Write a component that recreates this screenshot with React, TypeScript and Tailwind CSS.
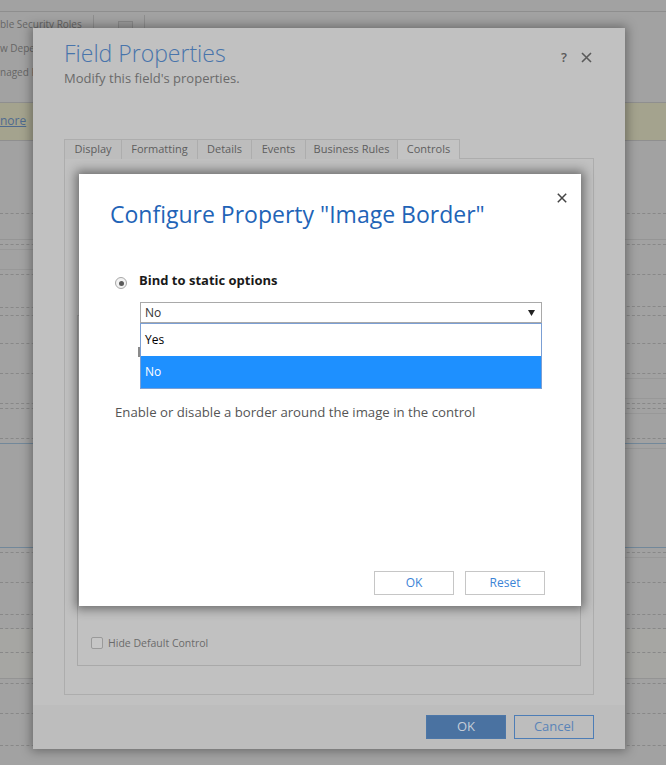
import React from "react";

const leftLines: string[] = [
  "h-[73px] border-b border-dashed border-[#888]",
  "h-[26px] border-b border-[#959595]",
  "h-[5px] border-b border-dashed border-[#888]",
  "h-[5px] border-b border-[#989898]",
  "h-[20px] border-b border-[#989898]",
  "h-[5px] border-b border-dashed border-[#888]",
  "h-[33px] border-b border-dashed border-[#888]",
  "h-[8px] border-b border-dashed border-[#888]",
  "h-[28px] border-b border-dashed border-[#888]",
  "h-[30px] border-b border-dashed border-[#888]",
  "h-[30px] border-b border-dashed border-[#888]",
  "h-[5px] border-b border-dashed border-[#888]",
  "h-[30px] border-b border-dashed border-[#888]",
  "h-[5px] border-b border-[#72889a]",
  "h-[104px] border-b border-[#72889a]",
  "h-[5px] border-b border-dashed border-[#888]",
  "h-[30px] border-b border-dashed border-[#888]",
  "h-[32px] border-b border-dashed border-[#888]",
  "h-[14px] border-b border-dashed border-[#888]",
  "h-[24px] border-b border-dashed border-[#888] bg-[#a6a6a3]",
  "h-[26px] border-b border-[#949494] bg-[#a6a6a3]",
  "h-[5px] border-b border-dashed border-[#888]",
  "h-[30px] border-b border-dashed border-[#888]",
  "h-[32px] border-b border-dashed border-[#888]",
];

const rightLines: string[] = [
  "h-[73px] border-b border-dashed border-[#888]",
  "h-[26px] border-b border-[#959595]",
  "h-[5px] border-b border-dashed border-[#888]",
  "h-[30px] border-b border-dashed border-[#888]",
  "h-[32px] border-b border-dashed border-[#888]",
  "h-[9px] border-b border-dashed border-[#888]",
  "h-[28px] border-b border-dashed border-[#888]",
  "h-[30px] border-b border-dashed border-[#888]",
  "h-[5px] border-b border-[#989898]",
  "h-[20px] border-b border-[#989898]",
  "h-[5px] border-b border-dashed border-[#888]",
  "h-[5px] border-b border-dashed border-[#888]",
  "h-[5px] border-b border-[#989898]",
  "h-[25px] border-b border-dashed border-[#888]",
  "h-[5px] border-b border-[#72889a]",
  "h-[5px] border-b border-[#989898]",
  "h-[99px] border-b border-[#72889a]",
  "h-[5px] border-b border-dashed border-[#888]",
  "h-[5px] border-b border-[#989898]",
  "h-[25px] border-b border-dashed border-[#888]",
  "h-[32px] border-b border-dashed border-[#888]",
  "h-[14px] border-b border-dashed border-[#888]",
  "h-[24px] border-b border-dashed border-[#888] bg-[#a6a6a3]",
  "h-[26px] border-b border-[#949494] bg-[#a6a6a3]",
  "h-[5px] border-b border-dashed border-[#888]",
  "h-[30px] border-b border-dashed border-[#888]",
  "h-[32px] border-b border-dashed border-[#888]",
];

function Background() {
  return (
    <div className="flex flex-col">
      <div className="h-[12px] border-b border-[#8e8e8e]" />
      <div className="h-[90px] flex flex-col text-[10px] leading-[24px] text-[#666]">
        <div className="flex items-start h-[24px]">
          <span className="whitespace-nowrap">ble Security Roles</span>
          <div className="ml-[11px] mt-[3px] w-px h-[18px] bg-[#8e8e8e]" />
          <div className="ml-[24px] mt-[9px] w-[15px] h-[12px] border border-[#8a8a8a] bg-[#9c9c9c]" />
          <div className="ml-[11px] mt-[3px] w-px h-[18px] bg-[#8e8e8e]" />
        </div>
        <div className="w-[33px] overflow-hidden whitespace-nowrap">w Depe</div>
        <div className="w-[33px] overflow-hidden whitespace-nowrap">naged P</div>
      </div>
      <div className="h-[39px] bg-[#a4a38e] border-y border-[#8f8f8f] pt-[10px] text-[12px] leading-[16px]">
        <span className="underline text-[#4f6a8f]">nore</span>
      </div>
      <div className="flex justify-between">
        <div className="w-[40px] flex flex-col">
          {leftLines.map((c, i) => (
            <div key={i} className={c} />
          ))}
        </div>
        <div className="w-[60px] flex flex-col">
          {rightLines.map((c, i) => (
            <div key={i} className={c} />
          ))}
        </div>
      </div>
    </div>
  );
}

const tabs = [
  { label: "Display", w: "w-[57px]" },
  { label: "Formatting", w: "w-[76px]" },
  { label: "Details", w: "w-[54px]" },
  { label: "Events", w: "w-[54px]" },
  { label: "Business Rules", w: "w-[92px]" },
];

function FieldDialog() {
  return (
    <div className="absolute left-[33px] top-[28px] w-[592px] h-[721px] bg-[#c1c1c1] shadow-[0_0_10px_2px_rgba(0,0,0,0.35)] flex flex-col">
      <div className="flex justify-between pl-[31px] pr-[33px] pt-[11px]">
        <div className="flex flex-col">
          <h1 className="text-[23px] leading-[28px] font-light text-[#4874ab]">Field Properties</h1>
          <p className="mt-[2px] text-[13px] leading-[18px] text-[#6a6a6a]">Modify this field's properties.</p>
        </div>
        <div className="flex items-center gap-[14px] mt-[10px] h-[16px]">
          <span className="text-[13px] font-semibold text-[#5a5a5a] leading-[16px]">?</span>
          <svg width="11" height="11" viewBox="0 0 11 11">
            <path d="M1 1 L10 10 M10 1 L1 10" stroke="#5a5a5a" strokeWidth="1.6" />
          </svg>
        </div>
      </div>

      <div className="mt-[52px] flex mx-[31px] h-[20px]">
        {tabs.map((t) => (
          <div
            key={t.label}
            className={`${t.w} h-[20px] border-l border-t border-[#adadad] bg-[#bdbdbd] text-center text-[11px] leading-[18px] text-[#5e5e5e]`}
          >
            {t.label}
          </div>
        ))}
        <div className="w-[63px] h-[20px] border-x border-t border-[#adadad] bg-[#c3c3c3] text-center text-[11px] leading-[18px] text-[#5e5e5e]">
          Controls
        </div>
        <div className="flex-1 h-[20px] border-b border-[#adadad]" />
      </div>

      <div className="mx-[31px] h-[536px] border-x border-b border-[#adadad] flex flex-col px-[12px] pt-[156px] pb-[28px]">
        <div className="flex-1 border border-[#a9a9a9] flex flex-col justify-end pl-[13px] pb-[15px]">
          <div className="flex items-center">
            <div className="w-[12px] h-[12px] rounded-[2px] border border-[#9a9a9a] bg-[#c6c6c6]" />
            <span className="ml-[5px] text-[10.5px] leading-[14px] text-[#6b6b6b]">Hide Default Control</span>
          </div>
        </div>
      </div>

      <div className="mt-auto h-[44px] bg-[#bdbdbd] flex justify-end items-start gap-[8px] pr-[31px] pt-[10px]">
        <button className="w-[80px] h-[24px] bg-[#4a72a1] border border-[#4d77a8] text-[13px] text-[#c5cdd8]">OK</button>
        <button className="w-[80px] h-[24px] border border-[#4d7db6] text-[13px] text-[#5a84b8]">Cancel</button>
      </div>
    </div>
  );
}

function ConfigModal() {
  return (
    <div className="absolute left-[79px] top-[174px] w-[502px] h-[432px] bg-white shadow-[0_0_10px_3px_rgba(0,0,0,0.45)] flex flex-col">
      <svg className="absolute top-[19px] right-[14px]" width="10" height="10" viewBox="0 0 10 10">
        <path d="M0.8 0.8 L9.2 9.2 M9.2 0.8 L0.8 9.2" stroke="#444" strokeWidth="1.5" />
      </svg>
      <div className="absolute left-[59px] top-[173px] w-[2px] h-[10px] bg-[#8a8a8a]" />

      <h2 className="pl-[31px] pt-[26px] text-[23px] leading-[28px] text-[#1f64b7] whitespace-nowrap">
        Configure Property "Image Border"
      </h2>

      <div className="mt-[43px] pl-[36px] flex items-start">
        <div className="mt-[6px] w-[12px] h-[12px] rounded-full border border-[#a8a8a8] bg-[#f2f2f2] flex items-center justify-center">
          <div className="w-[5px] h-[5px] rounded-full bg-[#5a5a5a]" />
        </div>
        <span className="ml-[12px] text-[13px] leading-[18px] font-bold text-[#1a1a1a]">Bind to static options</span>
      </div>

      <div className="mt-[13px] ml-[61px] w-[402px] flex flex-col">
        <div className="relative h-[21px] border border-[#a9a9a9] pl-[4px] text-[12px] leading-[19px] text-[#333]">
          No
          <svg className="absolute right-[6px] top-[7px]" width="7" height="6" viewBox="0 0 7 6">
            <path d="M0 0 L7 0 L3.5 6 Z" fill="#222" />
          </svg>
        </div>
        <div className="h-[66px] border border-[#7b9fd4] flex flex-col text-[12px]">
          <div className="h-[32px] flex items-center pl-[4px] text-black">Yes</div>
          <div className="h-[32px] flex items-center pl-[4px] bg-[#1e90ff] text-white">No</div>
        </div>
      </div>

      <p className="mt-[14px] pl-[36px] text-[13.2px] leading-[18px] text-[#555]">
        Enable or disable a border around the image in the control
      </p>

      <div className="mt-auto flex justify-end gap-[11px] pr-[36px] pb-[11px]">
        <button className="w-[80px] h-[24px] border border-[#c6c6c6] text-[12px] text-[#3b83d6]">OK</button>
        <button className="w-[80px] h-[24px] border border-[#c6c6c6] text-[12px] text-[#3b83d6]">Reset</button>
      </div>
    </div>
  );
}

export default function App() {
  return (
    <div className="relative w-[666px] h-[765px] overflow-hidden bg-[#a2a2a2] font-['Open_Sans',sans-serif]">
      <Background />
      <FieldDialog />
      <ConfigModal />
    </div>
  );
}
